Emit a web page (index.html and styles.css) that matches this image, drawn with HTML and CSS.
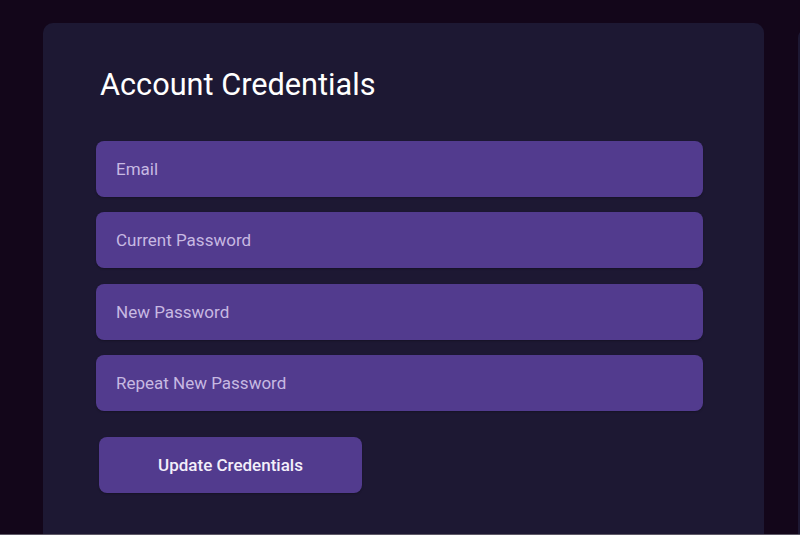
FILE: index.html
```html
<!DOCTYPE html>
<html>
<head>
<meta charset="utf-8">
<link rel="stylesheet" href="styles.css">
</head>
<body>
<div class="screen">
  <div class="row">
    <section class="card">
      <h1 class="title">Account Credentials</h1>
      <form class="form">
        <input class="field" type="email" placeholder="Email">
        <input class="field" type="password" placeholder="Current Password">
        <input class="field" type="password" placeholder="New Password">
        <input class="field" type="password" placeholder="Repeat New Password">
        <button class="btn" type="button">Update Credentials</button>
      </form>
    </section>
    <section class="card card-next"></section>
  </div>
</div>
</body>
</html>
```
FILE: styles.css
```css
html, body {
  margin: 0;
  padding: 0;
  background: #13061a;
  overflow: hidden;
}
.screen {
  height: 534px;
  border-bottom: 1px solid #5d5866;
  overflow: hidden;
  box-sizing: content-box;
}
.row {
  display: flex;
  gap: 34px;
  padding: 23px 0 0 43px;
}
.card {
  flex: 0 0 721px;
  height: 560px;
  background: #1d1833;
  border-radius: 10px;
  padding: 45px 0 0 53px;
  box-sizing: border-box;
  font-family: Roboto, "Noto Sans", sans-serif;
}
.card-next {
  margin-top: 5px;
}
.title {
  margin: 0 0 39px 4px;
  font-size: 30.7px;
  font-weight: 400;
  line-height: 34px;
  color: #ffffff;
}
.form {
  display: flex;
  flex-direction: column;
  align-items: flex-start;
  gap: 15.4px;
}
.field {
  width: 607px;
  height: 56px;
  box-sizing: border-box;
  border: none;
  border-radius: 8px;
  background: #523b8e;
  box-shadow: 0 1px 2px rgba(0,0,0,0.25);
  padding: 0 20px;
  font-family: Roboto, "Noto Sans", sans-serif;
  font-size: 17px;
  color: #ffffff;
  outline: none;
}
.field::placeholder {
  color: #c7b9e2;
}
.btn {
  margin: 10px 0 0 3px;
  width: 263px;
  height: 56px;
  border: none;
  border-radius: 8px;
  background: #523b8e;
  box-shadow: 0 1px 2px rgba(0,0,0,0.25);
  font-family: Roboto, "Noto Sans", sans-serif;
  font-size: 17px;
  font-weight: 500;
  color: #f3effa;
}
```
